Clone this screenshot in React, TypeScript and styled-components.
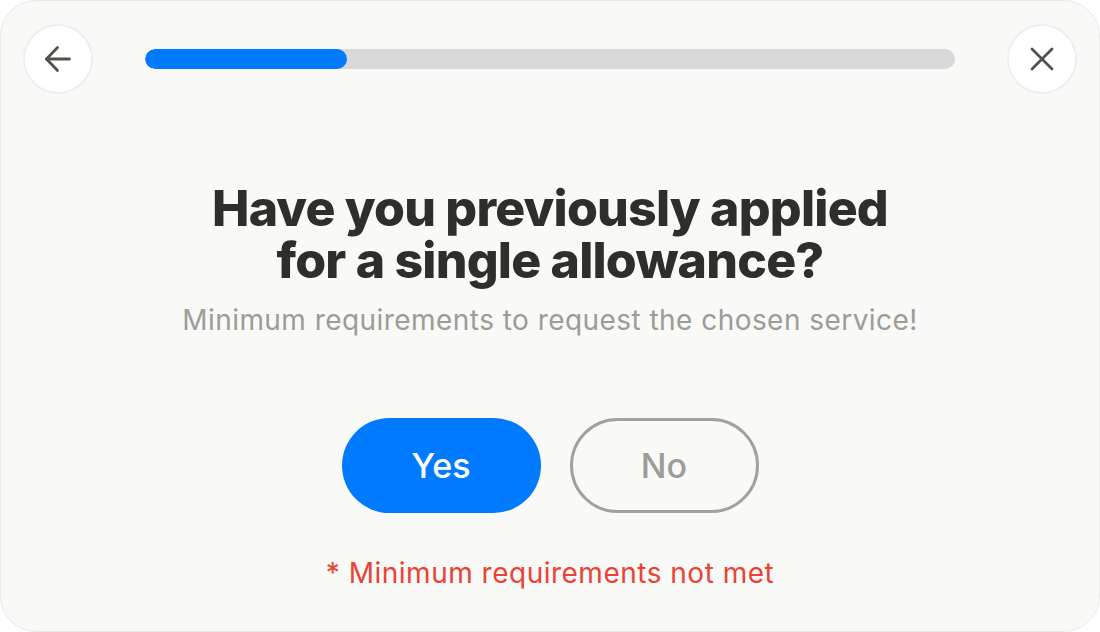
import React from "react";
import styled, { createGlobalStyle } from "styled-components";

const Global = createGlobalStyle`
  html, body { margin: 0; padding: 0; background: #ffffff; }
  body { font-family: Inter, "Noto Sans", sans-serif; }
  * { box-sizing: border-box; }
`;

const Card = styled.div`
  width: 1100px;
  height: 632px;
  background: #f9f9f7;
  border: 1px solid #ebebe8;
  border-radius: 36px;
  display: flex;
  flex-direction: column;
  align-items: center;
  padding: 23px 22px 0 22px;
`;

const TopBar = styled.div`
  width: 100%;
  display: flex;
  align-items: center;
  gap: 52px;
`;

const RoundButton = styled.button`
  width: 70px;
  height: 70px;
  flex: none;
  border-radius: 50%;
  background: #ffffff;
  border: 2px solid #efefed;
  display: flex;
  align-items: center;
  justify-content: center;
  padding: 0;
  color: #52524d;
`;

const Track = styled.div`
  flex: 1;
  height: 20px;
  border-radius: 10px;
  background: #d9d9d9;
  overflow: hidden;
`;

const Fill = styled.div`
  height: 100%;
  border-radius: 10px;
  background: #007bff;
`;

const Title = styled.h1`
  margin: 88px 0 0 0;
  font-family: Inter, sans-serif;
  font-weight: 800;
  font-size: 50px;
  line-height: 52px;
  letter-spacing: -0.8px;
  color: #2e2f2a;
  text-align: center;
`;

const Subtitle = styled.p`
  margin: 17px 0 0 0;
  font-family: Inter, sans-serif;
  font-weight: 400;
  font-size: 28px;
  line-height: 34px;
  letter-spacing: 0.45px;
  color: #9c9c98;
  text-align: center;
`;

const Choices = styled.div`
  display: flex;
  gap: 29px;
  margin-top: 81px;
`;

const Choice = styled.button<{ $active?: boolean }>`
  height: 95px;
  width: ${(p) => (p.$active ? 199 : 189)}px;
  border-radius: 48px;
  font-family: Inter, sans-serif;
  font-size: 34px;
  font-weight: 500;
  display: flex;
  align-items: center;
  justify-content: center;
  background: ${(p) => (p.$active ? "#007bff" : "transparent")};
  color: ${(p) => (p.$active ? "#ffffff" : "#9c9c98")};
  border: ${(p) => (p.$active ? "none" : "3px solid #a2a29d")};
`;

const ErrorText = styled.p`
  margin: 43px 0 0 0;
  font-family: Inter, sans-serif;
  font-size: 28px;
  line-height: 34px;
  letter-spacing: 0.5px;
  color: #ea4335;
  text-align: center;
`;

export default function App() {
  const progress = 0.249;
  return (
    <>
      <Global />
      <Card>
        <TopBar>
          <RoundButton aria-label="Back">
            <svg width="28" height="28" viewBox="-2 -2 28 28" fill="none" stroke="currentColor" strokeWidth="2.8" strokeLinecap="round" strokeLinejoin="round">
              <path d="M23.5 12H0.5" />
              <path d="M11.5 0.5L0.5 12l11 11.5" />
            </svg>
          </RoundButton>
          <Track>
            <Fill style={{ width: `${progress * 100}%` }} />
          </Track>
          <RoundButton aria-label="Close">
            <svg width="26" height="26" viewBox="-2 -2 26 26" fill="none" stroke="currentColor" strokeWidth="2.8" strokeLinecap="round">
              <path d="M21 1L1 21" />
              <path d="M1 1l20 20" />
            </svg>
          </RoundButton>
        </TopBar>
        <Title>
          Have you previously applied
          <br />
          for a single allowance?
        </Title>
        <Subtitle>Minimum requirements to request the chosen service!</Subtitle>
        <Choices>
          <Choice $active>Yes</Choice>
          <Choice>No</Choice>
        </Choices>
        <ErrorText>* Minimum requirements not met</ErrorText>
      </Card>
    </>
  );
}
